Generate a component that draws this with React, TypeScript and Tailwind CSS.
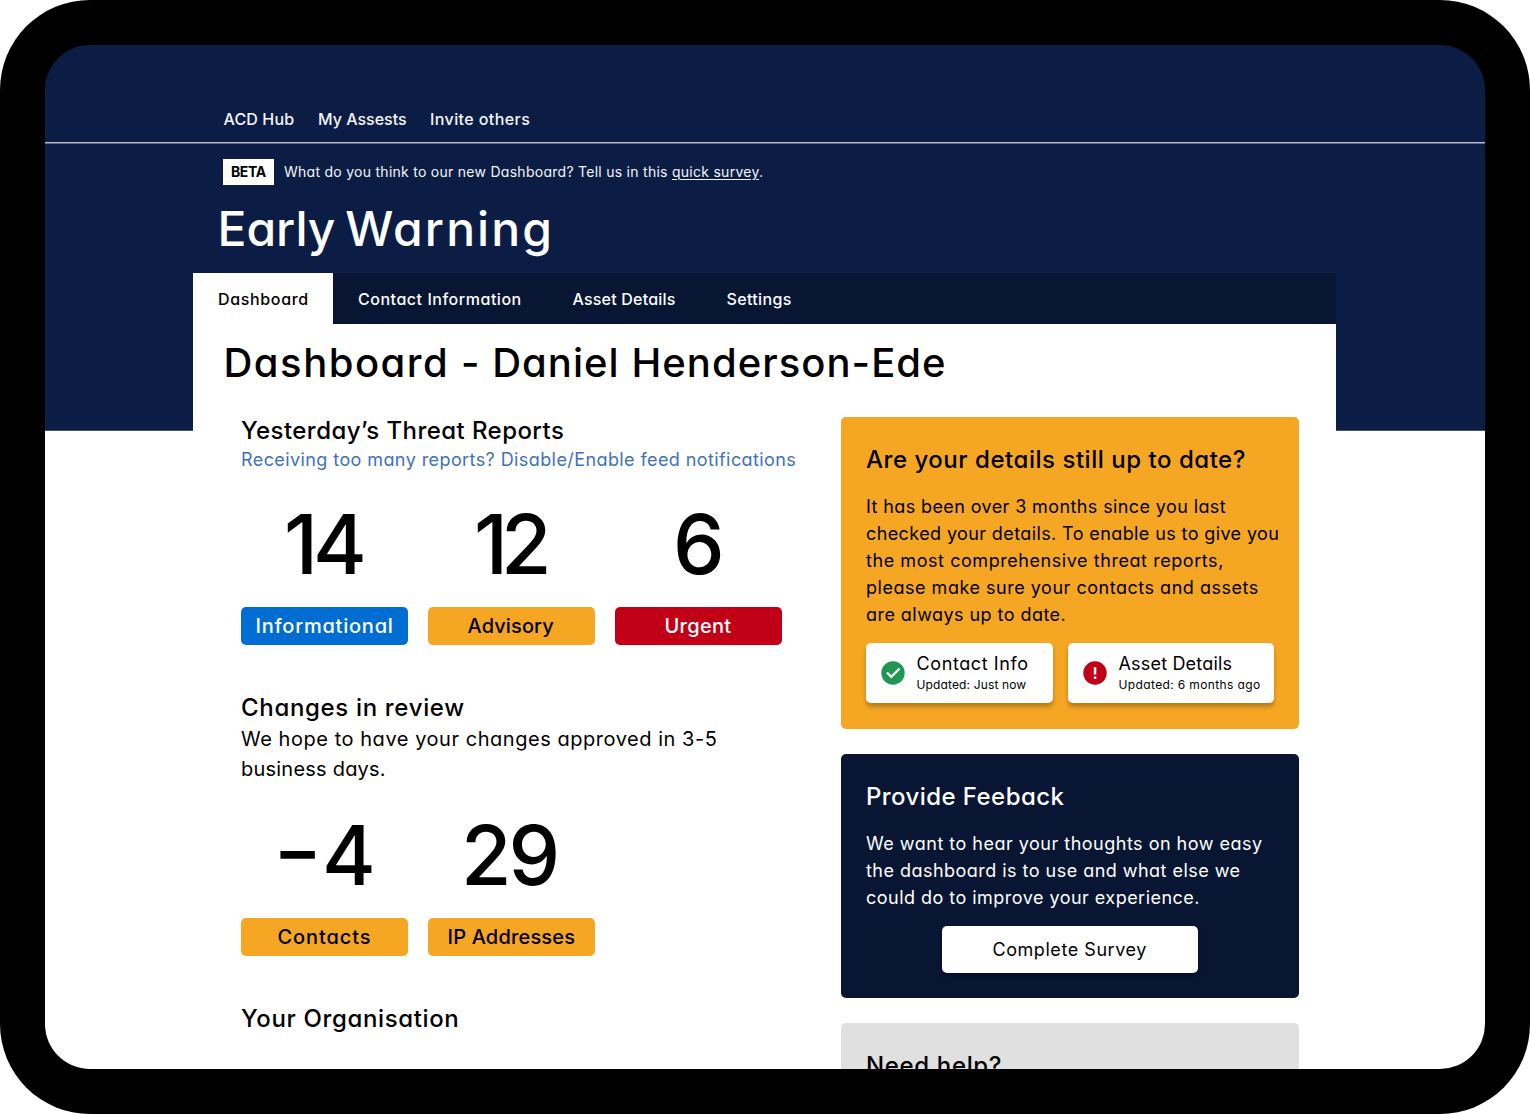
import type { ReactNode } from 'react';

function CheckIcon() {
  return (
    <svg viewBox="0 0 24 24" className="h-6 w-6 shrink-0">
      <circle cx="12" cy="12" r="11.7" fill="#219653" />
      <path d="M5.2 12.3 10.3 17.4 19.4 8.3 17.8 6.7 10.3 14.2 6.8 10.7Z" fill="#fff" />
    </svg>
  );
}

function AlertIcon() {
  return (
    <svg viewBox="0 0 24 24" className="h-6 w-6 shrink-0">
      <circle cx="12" cy="12" r="11.7" fill="#c10018" />
      <path d="M10.8 6.2h2.5v7.3h-2.5zM10.8 15.4h2.5v2.5h-2.5z" fill="#fff" />
    </svg>
  );
}

const tabs = [
  { label: 'Dashboard', cls: 'w-[140px] bg-white pl-[25px] text-black tracking-[0.65px]' },
  { label: 'Contact Information', cls: 'w-[214px] pl-[25px] text-white tracking-[0.53px]' },
  { label: 'Asset Details', cls: 'w-[154px] pl-[25.5px] text-white tracking-[0.2px]' },
  { label: 'Settings', cls: 'pl-[25.5px] text-white tracking-[0.35px]' },
];

function Stat({ value, valueCls, label, labelCls }: { value: ReactNode; valueCls: string; label: string; labelCls: string }) {
  return (
    <div className="w-[167px]">
      <div className={`h-[100px] text-[82px] leading-[100px] font-medium ${valueCls}`}>{value}</div>
      <div className={`mt-3 h-[38px] rounded-[5px] text-[20px] leading-[38px] font-medium ${labelCls}`}>{label}</div>
    </div>
  );
}

function Detail({ icon, title, titleCls, note, noteCls, cls }: { icon: ReactNode; title: string; titleCls: string; note: string; noteCls: string; cls: string }) {
  return (
    <div className={`flex h-[60px] items-center rounded-[5px] bg-white pl-[14.5px] shadow-[0_4px_4px_rgba(0,0,0,0.25)] ${cls}`}>
      {icon}
      <div className="pl-3">
        <div className={`text-[18px] leading-[23px] ${titleCls}`}>{title}</div>
        <div className={`text-[12px] leading-5 ${noteCls}`}>{note}</div>
      </div>
    </div>
  );
}

export default function App() {
  return (
    <div className="h-[1114px] w-[1530px] overflow-hidden rounded-[90px] bg-black p-[45px] font-['Inter',sans-serif] whitespace-nowrap [font-feature-settings:'cv11']">
      <div className="h-[1024px] overflow-hidden rounded-[45px] bg-[linear-gradient(#0b1d45_385px,#44527a_385px,#44527a_386px,#fff_386px)]">
        <nav className="flex h-[97px] items-end pb-[13px] pl-[178.5px] text-[16px] leading-5 font-medium text-[#f4f5f8]">
          <a className="w-[94.5px] tracking-[0.14px]">ACD Hub</a>
          <a className="w-[112px]">My Assests</a>
          <a className="tracking-[0.41px]">Invite others</a>
        </nav>
        <div className="h-px bg-[#b6bbc7]" />
        <div className="h-px bg-[#5d6986]" />

        <div className="flex items-center pt-[15px] pl-[178px]">
          <span className="h-[26px] w-[51px] bg-white pl-2 text-[14px] leading-[26px] font-bold tracking-[-0.4px] text-black">BETA</span>
          <p className="pl-2.5 text-[14px] leading-[26px] tracking-[0.27px] text-[#f4f5f8]">
            What do you think to our new Dashboard? Tell us in this <a className="underline decoration-1 underline-offset-2">quick survey</a>.
          </p>
        </div>
        <h1 className="pt-[15px] pl-[172.5px] text-[48px] leading-[58px] font-medium tracking-[2.1px] text-white">
          <span className="tracking-[0px] [word-spacing:-3px]">Early </span>Warning
        </h1>

        <div className="mt-[15px] mr-[149px] ml-[148px]">
          <div className="flex h-[51px] bg-[#081634] text-[16px] leading-[52px] font-medium">
            {tabs.map((t) => (
              <a key={t.label} className={t.cls}>{t.label}</a>
            ))}
          </div>

          <main className="h-[760px] bg-white text-black">
            <h2 className="pt-[14px] pl-[30.5px] text-[40px] leading-[50px] font-medium tracking-[1.04px]">
              <span className="tracking-[1.5px]">Dashboard</span> - Daniel Henderson-Ede
            </h2>
            <div className="flex pt-[29px] pl-[48px]">
              <div className="w-[600px]">
                <h3 className="text-[24px] leading-7 font-medium tracking-[0.44px]">Yesterday’s Threat Reports</h3>
                <a className="block pt-px text-[18px] leading-7 tracking-[0.41px] text-[#3f72b8]">
                  Receiving too many reports? Disable/Enable feed notifications
                </a>
                <div className="mt-[21px] flex gap-5">
                  <Stat value="14" valueCls="pl-[43px] tracking-[-5px]" label="Informational" labelCls="bg-[#006dd3] pl-[14.5px] tracking-[0.77px] text-white" />
                  <Stat value="12" valueCls="pl-[46px] tracking-[-7px]" label="Advisory" labelCls="bg-[#f5a623] pl-[39.5px] tracking-[0.11px]" />
                  <Stat value="6" valueCls="pl-[58px]" label="Urgent" labelCls="bg-[#c10018] pl-[49.5px] tracking-[0.3px] text-white" />
                </div>

                <h3 className="pt-[49px] text-[24px] leading-7 font-medium tracking-[0.67px]">Changes in review</h3>
                <p className="pt-[2px] text-[20px] leading-[30px]">
                  <span className="block tracking-[0.54px]">We hope to have your changes approved in 3-5</span>
                  <span className="block tracking-[0.22px]">business days.</span>
                </p>
                <div className="mt-[22px] flex gap-5">
                  <Stat
                    value={<><span className="inline-block origin-left -translate-y-[5px] scale-x-[1.3]">-</span><span className="pl-[11px]">4</span></>}
                    valueCls="pl-8"
                    label="Contacts"
                    labelCls="bg-[#f5a623] pl-[36.5px] tracking-[0.9px]"
                  />
                  <Stat value="29" valueCls="pl-[33px] tracking-[-3px]" label="IP Addresses" labelCls="bg-[#f5a623] pl-[19.5px] tracking-[0.18px]" />
                </div>
                <h3 className="pt-[49px] text-[24px] leading-7 font-medium tracking-[0.64px]">Your Organisation</h3>
              </div>

              <div className="w-[458px]">
                <section className="h-[312px] rounded-[5px] bg-[#f5a623] pt-[29px] pl-[25px]">
                  <h3 className="text-[24px] leading-7 font-medium tracking-[0.53px]">Are your details still up to date?</h3>
                  <p className="pt-[19px] text-[18px] leading-[27px]">
                    <span className="block tracking-[0.39px]">It has been over 3 months since you last</span>
                    <span className="block tracking-[0.39px]">checked your details. To enable us to give you</span>
                    <span className="block tracking-[0.56px]">the most comprehensive threat reports,</span>
                    <span className="block tracking-[0.52px]">please make sure your contacts and assets</span>
                    <span className="block tracking-[0.45px]">are always up to date.</span>
                  </p>
                  <div className="mt-[15px] flex gap-[15px]">
                    <Detail icon={<CheckIcon />} title="Contact Info" titleCls="tracking-[0.6px]" note="Updated: Just now" noteCls="tracking-[0.14px]" cls="w-[187px]" />
                    <Detail icon={<AlertIcon />} title="Asset Details" titleCls="tracking-[0.18px]" note="Updated: 6 months ago" noteCls="tracking-[0.37px]" cls="w-[206px]" />
                  </div>
                </section>

                <section className="mt-[25px] h-[244px] rounded-[5px] bg-[#081634] pt-[29px] pl-[25px] text-white">
                  <h3 className="text-[24px] leading-7 font-medium tracking-[0.43px]">Provide Feeback</h3>
                  <p className="pt-[19px] text-[18px] leading-[27px]">
                    <span className="block tracking-[0.49px]">We want to hear your thoughts on how easy</span>
                    <span className="block tracking-[0.47px]">the dashboard is to use and what else we</span>
                    <span className="block tracking-[0.47px]">could do to improve your experience.</span>
                  </p>
                  <button className="mt-[15px] ml-[76px] block h-[47px] w-[256px] rounded-[5px] bg-white pl-[50.5px] text-left text-[18px] leading-[47px] tracking-[0.55px] text-black shadow-[0_4px_4px_rgba(0,0,0,0.25)]">
                    Complete Survey
                  </button>
                </section>

                <section className="mt-[25px] h-[244px] rounded-[5px] bg-[#e0e0e0] pt-[29px] pl-[25px]">
                  <h3 className="text-[24px] leading-7 font-medium tracking-[0.65px]">Need help?</h3>
                </section>
              </div>
            </div>
          </main>
        </div>
      </div>
    </div>
  );
}
